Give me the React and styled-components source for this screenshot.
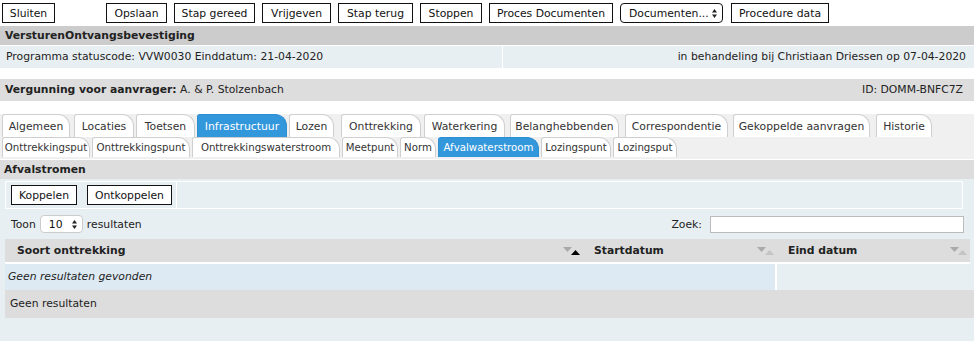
import React from 'react';
import styled, {createGlobalStyle} from 'styled-components';

const GlobalStyle = createGlobalStyle`
    html, body {
        margin: 0;
        padding: 0;
        background: #fff;
        font-family: "DejaVu Sans", Verdana, sans-serif;
        font-size: 10.8px;
        color: #222;
    }
`;

const LIGHT = '#e8eff2';
const GRAY = '#dddddd';

const Page = styled.div`
    width: 974px;
    height: 349px;
    overflow: hidden;
`;

const Toolbar = styled.div`
    display: flex;
    align-items: center;
    gap: 7px;
    padding: 2px 2px 0;
    height: 22px;
`;

const ToolButton = styled.button`
    font: inherit;
    color: #111;
    box-sizing: border-box;
    width: ${p => p.$w}px;
    height: 20px;
    padding: 0;
    background: #fff;
    border: 1px solid #111;
    border-radius: 0;
    white-space: nowrap;
    margin-left: ${p => p.$gap || 0}px;
`;

const SelectBox = styled.div`
    display: flex;
    align-items: center;
    justify-content: space-between;
    width: 103px;
    height: 20px;
    padding: 0 4px 0 8px;
    box-sizing: border-box;
    border: 1px solid #111;
    border-radius: 4px;
    background: #fff;
    color: #111;
`;

const TitleBar = styled.div`
    margin-top: 2px;
    height: 19px;
    line-height: 19px;
    padding-left: 5px;
    background: #cccccc;
    font-weight: bold;
`;

const InfoRow = styled.div`
    display: grid;
    grid-template-columns: 502px 1fr;
    gap: 1px;
    background: #fff;
    height: 22px;
    margin-top: 1px;
`;

const InfoCell = styled.div`
    background: ${LIGHT};
    line-height: 22px;
    padding: 0 8px 0 6px;
    text-align: ${p => p.$right ? 'right' : 'left'};
`;

const SubjectBar = styled.div`
    display: flex;
    justify-content: space-between;
    margin-top: 11px;
    height: 22px;
    line-height: 22px;
    padding: 0 11px 0 5px;
    background: ${GRAY};
    b { font-weight: bold; }
`;

const TabArea = styled.div`
    margin-top: 13px;
    background: #f0f0f0;
    height: 45px;
    padding-left: 2px;
    display: flex;
    flex-direction: column;
`;

const TabRow = styled.div`
    display: flex;
    height: ${p => p.$h}px;
    align-items: flex-end;
`;

const Tab = styled.div`
    box-sizing: border-box;
    flex: none;
    width: ${p => p.$w}px;
    height: ${p => p.$h}px;
    line-height: ${p => p.$h}px;
    margin-right: ${p => p.$mr || 0}px;
    font-size: ${p => p.$fs}px;
    text-align: center;
    white-space: nowrap;
    overflow: hidden;
    border: 1px solid ${p => p.$active ? '#2d8fd0' : '#cfcfcf'};
    border-bottom: none;
    border-radius: 3px 12px 0 0;
    background: ${p => p.$active ? '#3397dc' : '#fff'};
    color: ${p => p.$active ? '#fff' : '#333'};
`;

const SectionBar = styled.div`
    margin-top: 1px;
    height: 19px;
    line-height: 19px;
    padding-left: 4px;
    background: ${GRAY};
    font-weight: bold;
`;

const Panel = styled.div`
    background: ${LIGHT};
    height: 160px;
    padding: 2px 0 0 5px;
`;

const ActionBox = styled.div`
    display: flex;
    height: 26px;
    margin-right: 11px;
    border: 1px solid #fff;
`;

const ActionCell = styled.div`
    display: flex;
    align-items: center;
    gap: 10px;
    padding-left: 5px;
    width: 165px;
    border-right: 1px solid #fff;
`;

const SmallButton = styled.button`
    font: inherit;
    color: #111;
    height: 20px;
    padding: 0 7px;
    background: #fff;
    border: 1px solid #111;
    border-radius: 0;
`;

const FilterRow = styled.div`
    display: flex;
    align-items: center;
    justify-content: space-between;
    height: 28px;
    margin-top: 1px;
    padding: 0 10px 0 6px;
`;

const Inline = styled.div`
    display: flex;
    align-items: center;
    gap: 4px;
`;

const LengthSelect = styled.div`
    display: flex;
    align-items: center;
    justify-content: space-between;
    box-sizing: border-box;
    width: 43px;
    height: 18px;
    padding: 0 4px 0 8px;
    background: #fff;
    border: 1px solid #ccc;
    border-radius: 4px;
    color: #111;
`;

const SearchInput = styled.input`
    box-sizing: border-box;
    width: 254px;
    height: 17px;
    margin-left: 4px;
    border: 1px solid #bbb;
    background: #fff;
    font: inherit;
`;

const Table = styled.div`
    margin-top: 1px;
    display: flex;
    flex-direction: column;
`;

const HeadRow = styled.div`
    display: grid;
    grid-template-columns: 578px 194px 193px;
    background: ${GRAY};
    height: 23px;
    margin-right: 4px;
    border-bottom: 2px solid #fff;
`;

const HeadCell = styled.div`
    display: flex;
    align-items: center;
    justify-content: space-between;
    padding: 0 2px 0 ${p => p.$pl}px;
    font-weight: bold;
    color: #222;
`;

const EmptyRow = styled.div`
    display: grid;
    grid-template-columns: 772px 1fr;
    height: 26px;
`;

const EmptyCell = styled.div`
    background: #ddeaf4;
    font-style: italic;
    line-height: 26px;
    padding-left: 3px;
    border-right: 2px solid #fff;
    border-bottom: 1px solid #fff;
`;

const Footer = styled.div`
    height: 28px;
    line-height: 28px;
    padding-left: 5px;
    background: ${GRAY};
`;

const Arrows = () => (
    <svg width="7" height="11" viewBox="0 0 7 11">
        <path d="M3.5 1 L6 4.5 L1 4.5 Z" fill="#222"/>
        <path d="M3.5 10 L6 6.5 L1 6.5 Z" fill="#222"/>
    </svg>
);

const SortIcon = ({asc}) => (
    <svg width="19" height="12" viewBox="0 0 19 12">
        <path d="M1 2 L10 2 L5.5 7 Z" fill="#aaa"/>
        <path d="M13.5 5 L18 10 L9 10 Z" fill={asc ? '#000' : '#c4c4c4'}/>
    </svg>
);

// label, width, right gap, active
const row1 = [
    ['Algemeen', 68, 4], ['Locaties', 60, 2], ['Toetsen', 59, 2], ['Infrastructuur', 90, 2, true],
    ['Lozen', 45, 7], ['Onttrekking', 80, 3], ['Waterkering', 81, 5], ['Belanghebbenden', 109, 6],
    ['Correspondentie', 103, 5], ['Gekoppelde aanvragen', 137, 6], ['Historie', 56, 0],
];

const row2 = [
    ['Onttrekkingsput', 88], ['Onttrekkingspunt', 98], ['Onttrekkingswaterstroom', 148],
    ['Meetpunt', 56], ['Norm', 36], ['Afvalwaterstroom', 101, true], ['Lozingspunt', 70],
    ['Lozingsput', 64],
];

export default function App() {
    return (
        <Page>
            <GlobalStyle/>
            <Toolbar>
                <ToolButton $w={53}>Sluiten</ToolButton>
                <ToolButton $w={61} $gap={44}>Opslaan</ToolButton>
                <ToolButton $w={81}>Stap gereed</ToolButton>
                <ToolButton $w={69}>Vrijgeven</ToolButton>
                <ToolButton $w={75}>Stap terug</ToolButton>
                <ToolButton $w={62}>Stoppen</ToolButton>
                <ToolButton $w={124}>Proces Documenten</ToolButton>
                <SelectBox>Documenten... <Arrows/></SelectBox>
                <ToolButton $w={98} $gap={1}>Procedure data</ToolButton>
            </Toolbar>

            <TitleBar>VersturenOntvangsbevestiging</TitleBar>
            <InfoRow>
                <InfoCell>Programma statuscode: VVW0030 Einddatum: 21-04-2020</InfoCell>
                <InfoCell $right>in behandeling bij Christiaan Driessen op 07-04-2020</InfoCell>
            </InfoRow>

            <SubjectBar>
                <span><b>Vergunning voor aanvrager:</b> A. &amp; P. Stolzenbach</span>
                <span>ID: DOMM-BNFC7Z</span>
            </SubjectBar>

            <TabArea>
                <TabRow $h={23}>
                    {row1.map(([label, w, mr, active]) => (
                        <Tab key={label} $h={23} $fs={10.8} $w={w} $mr={mr} $active={active}>{label}</Tab>
                    ))}
                </TabRow>
                <TabRow $h={20}>
                    {row2.map(([label, w, active]) => (
                        <Tab key={label} $h={20} $fs={10.2} $w={w} $mr={2} $active={active}>{label}</Tab>
                    ))}
                </TabRow>
            </TabArea>

            <SectionBar>Afvalstromen</SectionBar>
            <Panel>
                <ActionBox>
                    <ActionCell>
                        <SmallButton>Koppelen</SmallButton>
                        <SmallButton>Ontkoppelen</SmallButton>
                    </ActionCell>
                </ActionBox>
                <FilterRow>
                    <Inline>
                        Toon <LengthSelect>10 <Arrows/></LengthSelect> resultaten
                    </Inline>
                    <Inline>
                        Zoek:<SearchInput/>
                    </Inline>
                </FilterRow>
                <Table>
                    <HeadRow>
                        <HeadCell $pl={12}>Soort onttrekking <SortIcon asc/></HeadCell>
                        <HeadCell $pl={11}>Startdatum <SortIcon/></HeadCell>
                        <HeadCell $pl={11}>Eind datum <SortIcon/></HeadCell>
                    </HeadRow>
                    <EmptyRow>
                        <EmptyCell>Geen resultaten gevonden</EmptyCell>
                        <div/>
                    </EmptyRow>
                    <Footer>Geen resultaten</Footer>
                </Table>
            </Panel>
        </Page>
    );
}
